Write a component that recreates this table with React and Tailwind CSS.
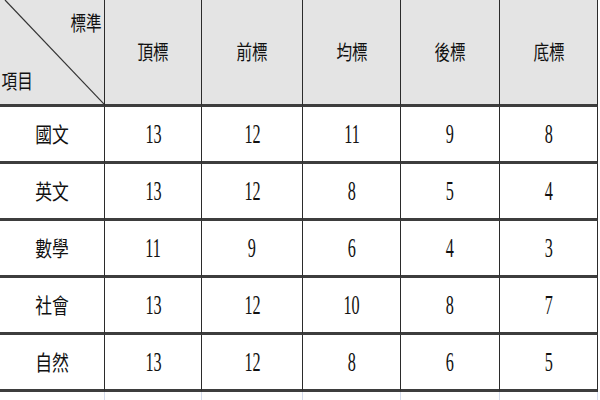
import { Fragment } from 'react'

const HEADS = ['頂標', '前標', '均標', '後標', '底標']

const ROWS = [
  { name: '國文', vals: [13, 12, 11, 9, 8] },
  { name: '英文', vals: [13, 12, 8, 5, 4] },
  { name: '數學', vals: [11, 9, 6, 4, 3] },
  { name: '社會', vals: [13, 12, 10, 8, 7] },
  { name: '自然', vals: [13, 12, 8, 6, 5] },
]

const cjk = { fontFamily: '"Noto Sans CJK TC", "Noto Sans CJK SC", sans-serif' }
const serif = { fontFamily: '"Liberation Serif", "DejaVu Serif", serif' }

// every cell: thin line on the right, thick rule at the bottom
const cell = 'flex items-center justify-center border-r border-r-[#2b2b2b] border-b-[3px] border-b-[#3d3d3d]'

export default function App() {
  return (
    <div className="w-[600px] h-[400px] overflow-hidden bg-white text-[#111]">
      <div className="grid grid-cols-[105px_97px_101px_98px_99px_98px] grid-rows-[107px_57px_57px_57px_57px_57px_20px]">

        {/* corner cell with the diagonal split */}
        <div className="relative flex flex-col justify-between bg-[#e4e4e4] border-r border-r-[#2b2b2b] border-b-[3px] border-b-[#3d3d3d] pt-[11px] pb-[11px]">
          <svg className="absolute inset-0 w-full h-full" viewBox="0 0 104 104" preserveAspectRatio="none">
            <line x1="5" y1="0" x2="104" y2="104" stroke="#333" strokeWidth="1.2" />
          </svg>
          <span style={cjk} className="self-end pr-[3px] text-[20px] leading-[24px] scale-x-[0.78] origin-right">標準</span>
          <span style={cjk} className="self-start pl-[2px] text-[20px] leading-[24px] scale-x-[0.78] origin-left">項目</span>
        </div>

        {HEADS.map(h => (
          <div key={h} className={`${cell} bg-[#e4e4e4]`}>
            <span style={cjk} className="text-[20px] scale-x-[0.78]">{h}</span>
          </div>
        ))}

        {ROWS.map(r => (
          <Fragment key={r.name}>
            <div className={cell}>
              <span style={cjk} className="text-[21px] scale-x-[0.8]">{r.name}</span>
            </div>
            {r.vals.map((v, i) => (
              <div key={i} className={cell}>
                <span style={serif} className="text-[27px] leading-none scale-x-[0.6]">{v}</span>
              </div>
            ))}
          </Fragment>
        ))}

        {/* start of the next row, cut off by the window */}
        {[0, 1, 2, 3, 4, 5].map(i => (
          <div key={'tail' + i} className="border-r border-r-[#d5dcec]" />
        ))}
      </div>
    </div>
  )
}
